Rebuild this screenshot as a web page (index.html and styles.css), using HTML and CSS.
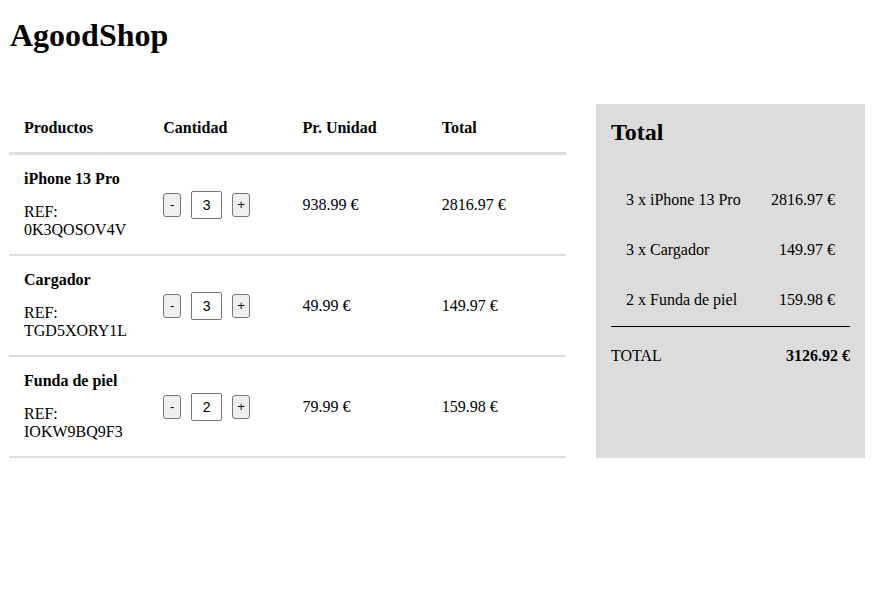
FILE: index.html
```html
<!DOCTYPE html>
<html lang="es">
<head>
<meta charset="utf-8">
<title>AgoodShop</title>
<link rel="stylesheet" href="styles.css">
</head>
<body>
<div class="page">
  <h1 class="logo">AgoodShop</h1>
  <div class="content">
    <table class="cart">
      <thead>
        <tr>
          <th>Productos</th>
          <th>Cantidad</th>
          <th>Pr. Unidad</th>
          <th>Total</th>
        </tr>
      </thead>
      <tbody>
        <tr>
          <td>
            <div class="name">iPhone 13 Pro</div>
            <div class="ref">REF: 0K3QOSOV4V</div>
          </td>
          <td>
            <div class="qty">
              <button class="qbtn">-</button>
              <input class="qinput" type="text" value="3">
              <button class="qbtn">+</button>
            </div>
          </td>
          <td>938.99 €</td>
          <td>2816.97 €</td>
        </tr>
        <tr>
          <td>
            <div class="name">Cargador</div>
            <div class="ref">REF: TGD5XORY1L</div>
          </td>
          <td>
            <div class="qty">
              <button class="qbtn">-</button>
              <input class="qinput" type="text" value="3">
              <button class="qbtn">+</button>
            </div>
          </td>
          <td>49.99 €</td>
          <td>149.97 €</td>
        </tr>
        <tr>
          <td>
            <div class="name">Funda de piel</div>
            <div class="ref">REF: IOKW9BQ9F3</div>
          </td>
          <td>
            <div class="qty">
              <button class="qbtn">-</button>
              <input class="qinput" type="text" value="2">
              <button class="qbtn">+</button>
            </div>
          </td>
          <td>79.99 €</td>
          <td>159.98 €</td>
        </tr>
      </tbody>
    </table>
    <aside class="summary">
      <h2 class="summary-title">Total</h2>
      <ul class="summary-list">
        <li class="summary-item"><span>3 x iPhone 13 Pro</span><span>2816.97 €</span></li>
        <li class="summary-item"><span>3 x Cargador</span><span>149.97 €</span></li>
        <li class="summary-item"><span>2 x Funda de piel</span><span>159.98 €</span></li>
      </ul>
      <hr class="summary-rule">
      <div class="summary-total"><span>TOTAL</span><strong>3126.92 €</strong></div>
    </aside>
  </div>
</div>
</body>
</html>
```
FILE: styles.css
```css
html, body {
  margin: 0;
  padding: 0;
  background: #fff;
}
body {
  font-family: "Liberation Serif", "Times New Roman", serif;
  font-size: 16px;
  color: #000;
}
.page {
  padding: 17px 12px 0 9px;
}
.logo {
  margin: 0 0 0 1px;
  font-size: 32px;
  font-weight: bold;
}
.content {
  display: flex;
  align-items: stretch;
  gap: 30px;
  margin-top: 50px;
}
.cart {
  width: 557px;
  flex: 0 0 557px;
  table-layout: fixed;
  border-collapse: separate;
  border-spacing: 0;
}
.cart th {
  width: 25%;
  text-align: left;
  font-weight: bold;
  padding: 15px;
  border-bottom: 3px solid #ddd;
}
.cart td {
  padding: 15px;
  border-bottom: 2px solid #ddd;
  vertical-align: middle;
}
.name {
  font-weight: bold;
  margin-bottom: 15px;
}
.qty {
  display: flex;
  align-items: center;
  gap: 10px;
}
.qbtn {
  width: 18px;
  height: 24px;
  padding: 0;
  font-family: "Liberation Sans", Arial, sans-serif;
  font-size: 13.33px;
  color: #000;
  background: #efefef;
  border: 1px solid #767676;
  border-radius: 3px;
}
.qinput {
  box-sizing: border-box;
  width: 31px;
  height: 28px;
  padding: 0;
  text-align: center;
  font-family: "Liberation Sans", Arial, sans-serif;
  font-size: 14px;
  color: #000;
  border: 1px solid #767676;
  border-radius: 2px;
  background: #fff;
}
.summary {
  flex: 0 0 269px;
  box-sizing: border-box;
  background: #dcdcdc;
  padding: 15px 15px 15px 15px;
}
.summary-title {
  margin: 0 0 29px 0;
  font-size: 24px;
  font-weight: bold;
}
.summary-list {
  list-style: none;
  margin: 0;
  padding: 0;
}
.summary-item {
  display: flex;
  justify-content: space-between;
  padding: 16px 15px;
}
.summary-rule {
  margin: 1px 0 0 0;
  border: 0;
  border-top: 1px solid #000;
  height: 0;
}
.summary-total {
  display: flex;
  justify-content: space-between;
  margin-top: 20px;
}
```
